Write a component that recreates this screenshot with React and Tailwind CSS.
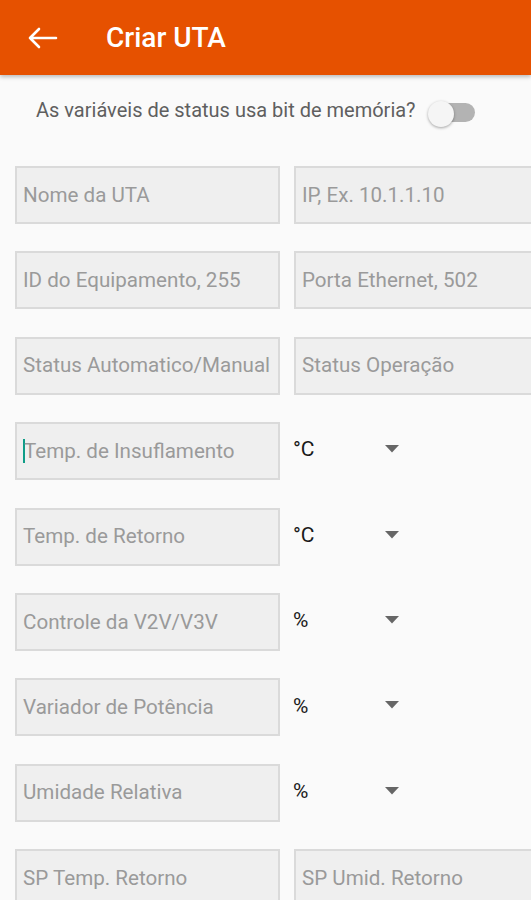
import { useState } from 'react'

const pairs = [
  ['Nome da UTA', 'IP, Ex. 10.1.1.10'],
  ['ID do Equipamento, 255', 'Porta Ethernet, 502'],
  ['Status Automatico/Manual', 'Status Operação'],
]

const units = [
  ['Temp. de Insuflamento', '°C', true],
  ['Temp. de Retorno', '°C'],
  ['Controle da V2V/V3V', '%'],
  ['Variador de Potência', '%'],
  ['Umidade Relativa', '%'],
]

function Field({ label, focused }) {
  return (
    <div className="w-[265px] h-[58px] shrink-0 bg-[#efefef] border-2 border-[#dadada] flex items-center pl-[6px] text-[20.6px] text-[#9a9a9a] whitespace-nowrap overflow-hidden">
      {focused && <span className="w-[2px] h-[24px] bg-[#0f9d87] -mr-[1px]" />}
      {label}
    </div>
  )
}

export default function App() {
  const [on, setOn] = useState(false)

  return (
    <div className="w-[531px] h-[900px] overflow-hidden bg-[#fafafa]" style={{ fontFamily: 'Roboto, "Noto Sans", sans-serif' }}>
      {/* Toolbar */}
      <div className="h-[75px] bg-[#e65100] flex items-center shadow-[0_2px_4px_rgba(0,0,0,0.25)] relative">
        <svg className="ml-[27px] w-[31px] h-[22px]" viewBox="0 0 31 22" fill="none" stroke="white" strokeWidth="2.6" strokeLinecap="round" strokeLinejoin="round">
          <path d="M29 11H3M12 2L3 11l9 9" />
        </svg>
        <h1 className="ml-[48px] text-white text-[28px] font-medium">Criar UTA</h1>
      </div>

      {/* Switch row */}
      <div className="flex items-center pl-[36px] pt-[8px] h-[66px]">
        <span className="text-[20px] text-[#5f5f5f] pb-[4px]">As variáveis de status usa bit de memória?</span>
        <button onClick={() => setOn(!on)} className="relative ml-[12px] w-[48px] h-[26px] flex items-center">
          <span className="absolute left-[12px] w-[35px] h-[19px] rounded-full bg-[#b3b3b3]" />
          <span className="absolute left-0 top-[2px] w-[26px] h-[26px] rounded-full bg-[#f5f5f5] shadow-[0_1px_3px_rgba(0,0,0,0.35)]" />
        </button>
      </div>

      {/* Form */}
      <div className="flex flex-col gap-[27.4px] pl-[15px] pt-[25px]">
        {pairs.map(([a, b]) => (
          <div key={a} className="flex gap-[14px]">
            <Field label={a} />
            <Field label={b} />
          </div>
        ))}
        {units.map(([label, unit, focused]) => (
          <div key={label} className="flex items-center">
            <Field label={label} focused={focused} />
            <span className="ml-[13px] text-[21px] text-[#1a1a1a] w-[92px] pb-[2px]">{unit}</span>
            <svg className="w-[14px] h-[8px] mb-[4px]" viewBox="0 0 14 8">
              <path d="M0 0h14L7 7.5z" fill="#666" />
            </svg>
          </div>
        ))}
        <div className="flex gap-[14px]">
          <Field label="SP Temp. Retorno" />
          <Field label="SP Umid. Retorno" />
        </div>
      </div>
    </div>
  )
}
